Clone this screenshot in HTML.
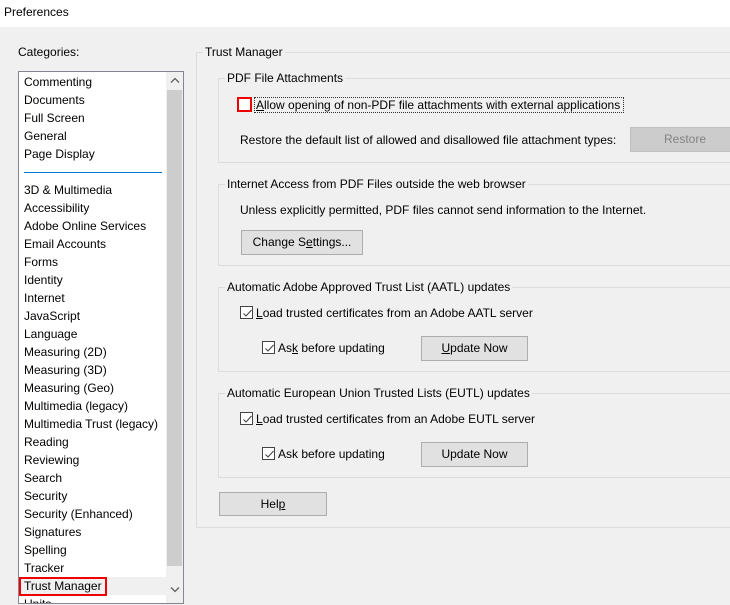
<!DOCTYPE html>
<html><head><style>
*{margin:0;padding:0;box-sizing:border-box}
body{width:730px;height:605px;background:#f0f0f0;font-family:"Liberation Sans",sans-serif;font-size:12px;color:#000;position:relative;overflow:hidden}
.a{position:absolute;white-space:nowrap}
.t{position:absolute;white-space:nowrap;line-height:14px}
.grp{position:absolute;border:1px solid #dcdcdc}
.lbl{position:absolute;background:#f0f0f0;padding:0 2px;line-height:14px;top:-8px;left:6px}
.btn{position:absolute;background:#e1e1e1;border:1px solid #adadad;text-align:center;line-height:23px}
.cb{position:absolute;width:13px;height:13px;border:1px solid #444;background:#fff}
.cb svg{position:absolute;left:1px;top:1px}
.li{position:absolute;left:5px;line-height:18px}
</style></head><body>
<div class="a" style="left:0;top:0;width:730px;height:27px;background:#fff"></div>
<div class="t" style="left:4px;top:5px">Preferences</div>
<div class="t" style="left:18px;top:45px">Categories:</div>
<div class="a" style="left:18px;top:71px;width:166px;height:533px;background:#fff;border:1px solid #828790;overflow:hidden">
 <div class="a" style="left:147px;top:0;width:17px;height:533px;background:#f0f0f0"></div>
 <div class="a" style="left:148px;top:18px;width:15px;height:476px;background:#cdcdcd"></div>
 <svg class="a" style="left:151px;top:5px" width="10" height="7"><path d="M1 5.5L5 1.5L9 5.5" stroke="#606060" fill="none" stroke-width="1.3"/></svg>
 <svg class="a" style="left:151px;top:514px" width="10" height="7"><path d="M1 1.5L5 5.5L9 1.5" stroke="#606060" fill="none" stroke-width="1.3"/></svg>
 <div class="li" style="top:1px">Commenting</div>
 <div class="li" style="top:19px">Documents</div>
 <div class="li" style="top:37px">Full Screen</div>
 <div class="li" style="top:55px">General</div>
 <div class="li" style="top:73px">Page Display</div>
 <div class="a" style="left:5px;top:100px;width:138px;height:1px;background:#0078d7"></div>
 <div class="li" style="top:109px">3D &amp; Multimedia</div>
 <div class="li" style="top:127px">Accessibility</div>
 <div class="li" style="top:145px">Adobe Online Services</div>
 <div class="li" style="top:163px">Email Accounts</div>
 <div class="li" style="top:181px">Forms</div>
 <div class="li" style="top:199px">Identity</div>
 <div class="li" style="top:217px">Internet</div>
 <div class="li" style="top:235px">JavaScript</div>
 <div class="li" style="top:253px">Language</div>
 <div class="li" style="top:271px">Measuring (2D)</div>
 <div class="li" style="top:289px">Measuring (3D)</div>
 <div class="li" style="top:307px">Measuring (Geo)</div>
 <div class="li" style="top:325px">Multimedia (legacy)</div>
 <div class="li" style="top:343px">Multimedia Trust (legacy)</div>
 <div class="li" style="top:361px">Reading</div>
 <div class="li" style="top:379px">Reviewing</div>
 <div class="li" style="top:397px">Search</div>
 <div class="li" style="top:415px">Security</div>
 <div class="li" style="top:433px">Security (Enhanced)</div>
 <div class="li" style="top:451px">Signatures</div>
 <div class="li" style="top:469px">Spelling</div>
 <div class="li" style="top:487px">Tracker</div>
 <div class="a" style="left:0;top:505px;width:147px;height:18px;background:#f0f0f0"></div>
 <div class="a" style="left:0;top:505px;width:88px;height:19px;border:2px solid #e00"></div>
 <div class="li" style="top:505px">Trust Manager</div>
 <div class="li" style="top:523px">Units</div>
</div>

<div class="grp" style="left:196px;top:52px;width:560px;height:476px"><div class="lbl">Trust Manager</div></div>

<div class="grp" style="left:218px;top:78px;width:540px;height:85px"><div class="lbl">PDF File Attachments</div></div>
<div class="a" style="left:237px;top:97px;width:15px;height:15px;border:2px solid #e00;background:#fff"></div>
<div class="a" style="left:254px;top:97px;width:370px;height:16px;border:1px dotted #333"></div>
<div class="t" style="left:256px;top:98px"><u>A</u>llow opening of non-PDF file attachments with external applications</div>
<div class="t" style="left:240px;top:133px">Restore the default list of allowed and disallowed file attachment types:</div>
<div class="btn" style="left:630px;top:127px;width:110px;height:25px;background:#cccccc;border-color:#bfbfbf;color:#838383">Restore</div>

<div class="grp" style="left:218px;top:184px;width:540px;height:82px"><div class="lbl">Internet Access from PDF Files outside the web browser</div></div>
<div class="t" style="left:240px;top:203px">Unless explicitly permitted, PDF files cannot send information to the Internet.</div>
<div class="btn" style="left:241px;top:230px;width:122px;height:25px">Change S<u>e</u>ttings...</div>

<div class="grp" style="left:218px;top:287px;width:540px;height:85px"><div class="lbl">Automatic Adobe Approved Trust List (AATL) updates</div></div>
<div class="cb" style="left:240px;top:306px"><svg width="11" height="11"><path d="M1.5 5.5L4 8L9.5 2" stroke="#444" fill="none" stroke-width="1.1"/></svg></div>
<div class="t" style="left:256px;top:306px"><u>L</u>oad trusted certificates from an Adobe AATL server</div>
<div class="cb" style="left:262px;top:341px"><svg width="11" height="11"><path d="M1.5 5.5L4 8L9.5 2" stroke="#444" fill="none" stroke-width="1.1"/></svg></div>
<div class="t" style="left:278px;top:341px">As<u>k</u> before updating</div>
<div class="btn" style="left:421px;top:336px;width:107px;height:25px"><u>U</u>pdate Now</div>

<div class="grp" style="left:218px;top:393px;width:540px;height:85px"><div class="lbl">Automatic European Union Trusted Lists (EUTL) updates</div></div>
<div class="cb" style="left:240px;top:412px"><svg width="11" height="11"><path d="M1.5 5.5L4 8L9.5 2" stroke="#444" fill="none" stroke-width="1.1"/></svg></div>
<div class="t" style="left:256px;top:412px"><u>L</u>oad trusted certificates from an Adobe EUTL server</div>
<div class="cb" style="left:262px;top:447px"><svg width="11" height="11"><path d="M1.5 5.5L4 8L9.5 2" stroke="#444" fill="none" stroke-width="1.1"/></svg></div>
<div class="t" style="left:278px;top:447px">Ask before updating</div>
<div class="btn" style="left:421px;top:442px;width:107px;height:25px">Update Now</div>

<div class="btn" style="left:219px;top:492px;width:108px;height:24px">Hel<u>p</u></div>
</body></html>
